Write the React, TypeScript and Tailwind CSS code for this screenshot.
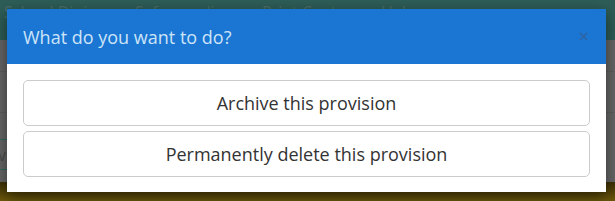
import { X } from "lucide-react";

const font = { fontFamily: '"Open Sans", "Noto Sans", sans-serif' };

function PageBehind() {
  // the page under the dialog, already dimmed by the backdrop
  return (
    <div className="flex h-full w-full flex-col bg-[#676767]">
      <div className="flex h-[40px] shrink-0 gap-[29px] bg-[#2e5d57] pl-[4px] pt-[2px] text-[16px] leading-[20px] text-[#4c6e68]">
        <span>School Dining</span>
        <span>Safeguarding</span>
        <span>Print Centre</span>
        <span>Help</span>
      </div>
      <div className="h-[32px] border-b border-[#5e5e5e]" />
      <div className="h-[41px] border-b border-[#5e5e5e]" />
      <div className="mt-[26px] flex h-[31px] w-[60px] -ml-[40px] items-center border-y border-[#2f6b62] pl-[38px] text-[16px] text-[#4d4d4d]">
        vis
      </div>
      <div className="mt-[12px] flex-1 bg-gradient-to-b from-[#3d3005] to-[#6e5a0b]" />
    </div>
  );
}

export default function App() {
  return (
    <div className="relative h-[201px] w-[615px] overflow-hidden" style={font}>
      <PageBehind />
      <div className="absolute left-[7px] top-[9px] w-[599px] bg-white shadow-[0_5px_15px_rgba(0,0,0,0.5)]">
        <div className="flex h-[55px] items-center justify-between bg-[#1a76d2] pl-4 pr-[16px]">
          <h4 className="text-[18px] leading-[22px] text-[#cde4f8]">What do you want to do?</h4>
          <X className="h-[13px] w-[13px] text-[#2f64a3]" strokeWidth={3} />
        </div>
        <div className="flex flex-col gap-[5px] px-4 pb-[15px] pt-4">
          <button
            type="button"
            className="h-[46px] w-full rounded-[5px] border border-[#cccccc] bg-white text-[18px] text-[#333333]"
          >
            Archive this provision
          </button>
          <button
            type="button"
            className="h-[46px] w-full rounded-[5px] border border-[#cccccc] bg-white text-[18px] text-[#333333]"
          >
            Permanently delete this provision
          </button>
        </div>
      </div>
    </div>
  );
}
